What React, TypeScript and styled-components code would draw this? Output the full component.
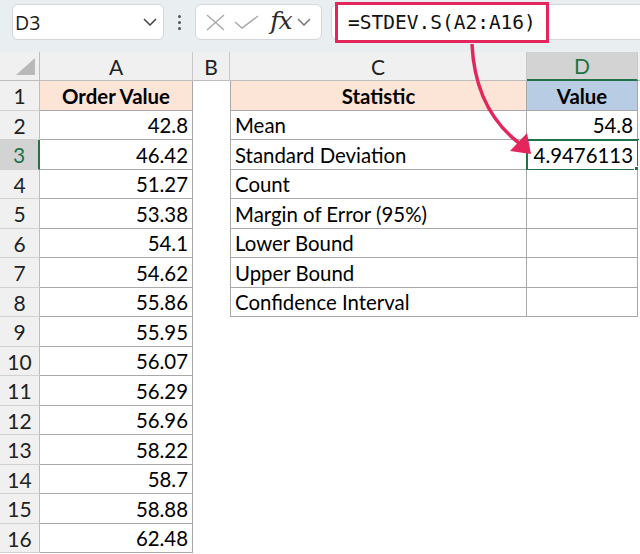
import React from 'react';
import styled, { createGlobalStyle } from 'styled-components';

const GlobalStyle = createGlobalStyle`
    html, body {
        margin: 0;
        padding: 0;
        background: #fff;
    }
    body {
        font-family: Lato, "Liberation Sans", sans-serif;
    }
`;

const GREEN = '#217346';
const RED = '#e3265b';
const CELL_LINE = '#a8a8a8';

const Page = styled.div`
    position: relative;
    width: 640px;
    height: 554px;
    overflow: hidden;
    background: #fff;
`;

const Toolbar = styled.div`
    display: flex;
    align-items: flex-start;
    height: 52px;
    box-sizing: border-box;
    padding: 4px 0 0 12px;
    background: #e9eef0;
`;

const Field = styled.div`
    display: flex;
    align-items: center;
    height: 36px;
    box-sizing: border-box;
    background: #fff;
    border: 1px solid #d3d7d9;
    border-radius: 6px;
`;

const NameBox = styled(Field)`
    width: 152px;
    justify-content: space-between;
    padding: 0 6px 0 2px;
    font-family: "Open Sans", "Liberation Sans", sans-serif;
    font-size: 19.5px;
    color: #1a1a1a;
`;

const Dots = styled.div`
    width: 31px;
    height: 36px;
    display: flex;
    flex-direction: column;
    align-items: center;
    justify-content: center;
    gap: 3px;

    span {
        width: 3px;
        height: 3px;
        border-radius: 50%;
        background: #555;
    }
`;

const FxBox = styled(Field)`
    width: 127px;
    padding: 0 3px 0 8px;
`;

const IconSlot = styled.div<{ $w: number }>`
    width: ${p => p.$w}px;
    display: flex;
    align-items: center;
    justify-content: center;
`;

const FxGlyph = styled.span`
    font-family: "DejaVu Serif", "Liberation Serif", serif;
    font-style: italic;
    font-size: 25px;
    line-height: 1;
    color: #2b2b2b;
    letter-spacing: -1px;
    margin-top: -3px;
`;

const FormulaBar = styled(Field)`
    flex: 1;
    margin-left: 9px;
    margin-right: -8px;
    padding-left: 3px;
    overflow: visible;
`;

const FormulaText = styled.span`
    display: inline-flex;
    align-items: center;
    height: 41px;
    box-sizing: border-box;
    padding: 0 10px 0 10px;
    border: 3px solid ${RED};
    background: #fff;
    font-family: "DejaVu Sans Mono", "Liberation Mono", monospace;
    font-size: 19.5px;
    color: #111;
`;

const Sheet = styled.div`
    display: grid;
    grid-template-columns: 40px 153px 37px 297px 111px 1fr;
    grid-template-rows: 29px repeat(8, 30px 29px);
`;

const Corner = styled.div`
    position: relative;
    background: #f0f0f0;
    border-right: 1px solid #bdbdbd;
    border-bottom: 1px solid #bdbdbd;
    box-sizing: border-box;
`;

const CornerMark = styled.svg`
    position: absolute;
    left: 16px;
    bottom: 5px;
`;

const ColHead = styled.div<{ $active?: boolean }>`
    display: flex;
    align-items: center;
    justify-content: center;
    box-sizing: border-box;
    font-size: 21px;
    color: ${p => (p.$active ? GREEN : '#222')};
    background: ${p => (p.$active ? '#d3d3d3' : '#f0f0f0')};
    border-right: 1px solid #c9c9c9;
    border-bottom: ${p => (p.$active ? `2px solid ${GREEN}` : '1px solid #bdbdbd')};
`;

const RowHead = styled.div<{ $active?: boolean }>`
    display: flex;
    align-items: center;
    justify-content: center;
    box-sizing: border-box;
    font-size: 21px;
    color: ${p => (p.$active ? GREEN : '#222')};
    background: ${p => (p.$active ? '#d3d3d3' : '#f0f0f0')};
    border-right: ${p => (p.$active ? `2px solid ${GREEN}` : '1px solid #bdbdbd')};
    border-bottom: 1px solid #d2d2d2;
`;

type TCell = {
    $fill?: string;
    $bold?: boolean;
    $align?: 'left' | 'right' | 'center';
    $boxed?: boolean;
    $leftEdge?: boolean;
};

const justify = { left: 'flex-start', right: 'flex-end', center: 'center' };

const Cell = styled.div<TCell>`
    position: relative;
    display: flex;
    align-items: center;
    justify-content: ${p => justify[p.$align || 'left']};
    box-sizing: border-box;
    padding: 0 4px 0 4px;
    font-size: 20.4px;
    font-weight: ${p => (p.$bold ? 700 : 400)};
    color: #000;
    white-space: nowrap;
    background: ${p => p.$fill || '#fff'};
    border-right: ${p => (p.$boxed ? `1px solid ${CELL_LINE}` : 'none')};
    border-bottom: ${p => (p.$boxed ? `1px solid ${CELL_LINE}` : 'none')};
    border-left: ${p => (p.$leftEdge ? `1px solid ${CELL_LINE}` : 'none')};
`;

const Selection = styled.div`
    position: absolute;
    left: -1px;
    top: -1px;
    right: -2px;
    bottom: -2px;
    border: 2px solid ${GREEN};
    pointer-events: none;
`;

const FillHandle = styled.div`
    position: absolute;
    right: -5px;
    bottom: -5px;
    width: 6px;
    height: 6px;
    background: ${GREEN};
    border: 1px solid #fff;
`;

const Overlay = styled.svg`
    position: absolute;
    left: 0;
    top: 0;
    pointer-events: none;
`;

const orderValues = [
    '42.8', '46.42', '51.27', '53.38', '54.1', '54.62', '55.86', '55.95',
    '56.07', '56.29', '56.96', '58.22', '58.7', '58.88', '62.48',
];

const stats = [
    ['Mean', '54.8'],
    ['Standard Deviation', '4.9476113'],
    ['Count', ''],
    ['Margin of Error (95%)', ''],
    ['Lower Bound', ''],
    ['Upper Bound', ''],
    ['Confidence Interval', ''],
];

const Chevron = ({ color = '#444' }: { color?: string }) => (
    <svg width="14" height="8" viewBox="0 0 14 8">
        <polyline points="1,1 7,7 13,1" fill="none" stroke={color} strokeWidth="1.5" />
    </svg>
);

function renderRow(r: number) {
    const active = r === 3;
    const cells: React.ReactNode[] = [];
    cells.push(<RowHead key={`h${r}`} $active={active}>{r}</RowHead>);

    if (r === 1) {
        cells.push(<Cell key="a1" $boxed $fill="#fce4d6" $bold $align="center">Order Value</Cell>);
    } else {
        cells.push(<Cell key={`a${r}`} $boxed $align="right">{orderValues[r - 2]}</Cell>);
    }

    cells.push(<Cell key={`b${r}`} />);

    if (r === 1) {
        cells.push(<Cell key="c1" $boxed $leftEdge $fill="#fce4d6" $bold $align="center">Statistic</Cell>);
        cells.push(<Cell key="d1" $boxed $fill="#b8cce4" $bold $align="center">Value</Cell>);
    } else if (r <= 8) {
        const [label, value] = stats[r - 2];
        cells.push(<Cell key={`c${r}`} $boxed $leftEdge>{label}</Cell>);
        cells.push(
            <Cell key={`d${r}`} $boxed $align="right">
                {value}
                {active && (
                    <Selection>
                        <FillHandle />
                    </Selection>
                )}
            </Cell>
        );
    } else {
        cells.push(<Cell key={`c${r}`} />);
        cells.push(<Cell key={`d${r}`} />);
    }

    cells.push(<Cell key={`e${r}`} />);
    return cells;
}

export default function App() {
    const rows = Array.from({ length: 16 }, (_, i) => i + 1);
    return (
        <Page>
            <GlobalStyle />
            <Toolbar>
                <NameBox>
                    <span>D3</span>
                    <Chevron />
                </NameBox>
                <Dots>
                    <span />
                    <span />
                    <span />
                </Dots>
                <FxBox>
                    <IconSlot $w={22}>
                        <svg width="19" height="17" viewBox="0 0 19 17">
                            <path d="M1 1 L18 16 M18 1 L1 16" stroke="#a9a9a9" strokeWidth="1.4" fill="none" />
                        </svg>
                    </IconSlot>
                    <IconSlot $w={40}>
                        <svg width="25" height="14" viewBox="0 0 25 14">
                            <polyline points="1,7 8,13 24,1" stroke="#a9a9a9" strokeWidth="1.4" fill="none" />
                        </svg>
                    </IconSlot>
                    <IconSlot $w={30}>
                        <FxGlyph>fx</FxGlyph>
                    </IconSlot>
                    <IconSlot $w={16}>
                        <Chevron color="#777" />
                    </IconSlot>
                </FxBox>
                <FormulaBar>
                    <FormulaText>=STDEV.S(A2:A16)</FormulaText>
                </FormulaBar>
            </Toolbar>
            <Sheet>
                <Corner>
                    <CornerMark width="19" height="17" viewBox="0 0 19 17">
                        <polygon points="0,17 19,0 19,17" fill="#b9b9b9" />
                    </CornerMark>
                </Corner>
                <ColHead>A</ColHead>
                <ColHead>B</ColHead>
                <ColHead>C</ColHead>
                <ColHead $active>D</ColHead>
                <ColHead />
                {rows.map(renderRow)}
            </Sheet>
            <Overlay width="640" height="554" viewBox="0 0 640 554">
                <path d="M472 44 C 474 88, 489 120, 519 143" fill="none" stroke={RED} strokeWidth="3.5" />
                <polygon points="510,151 527,133 531,154" fill={RED} />
            </Overlay>
        </Page>
    );
}
